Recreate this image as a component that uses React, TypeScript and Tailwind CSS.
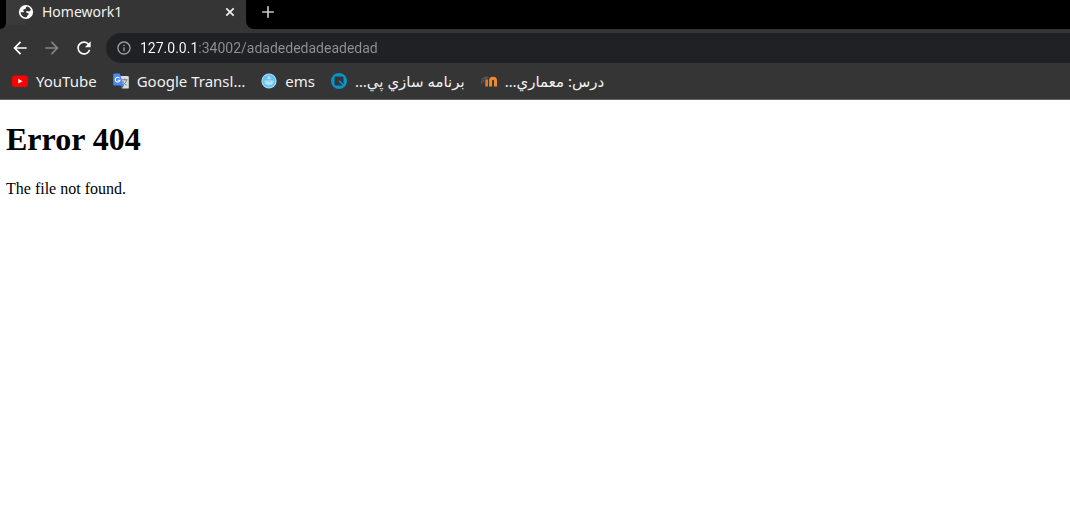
import React from "react";
import { MdArrowBack, MdArrowForward, MdAdd, MdInfoOutline, MdRefresh } from "react-icons/md";

function GlobeIcon() {
  return (
    <svg viewBox="0 0 16 16" className="mt-1 size-4" aria-hidden="true">
      <circle cx="8" cy="8" r="7.1" fill="#fff" />
      <path
        d="M9.3 2.6c1.6.4 3.2 1.800 3.800 3.700-.9-.1-1.200.7-2 1.100-.9.300-1.300-.4-2.200-.3-.7.1-1.100 1-.6 1.500.6.500 1.700.3 2.200 1 .5.800-.3 1.400-1 1.800-.5.400-.5 1.400-1.500 2C5.200 13.400 2.800 11.200 2.500 8.300H5c1 0 1.100-.9.500-1.400-.6-.6-.2-1.500.6-1.600.9-.1 1.600-.2 1.700-1.100.1-.8.500-1.500 1.500-1.600z"
        fill="#353535"
      />
    </svg>
  );
}

function YouTubeIcon() {
  return (
    <svg viewBox="0 0 16 16" className="size-4" aria-hidden="true">
      <rect x="0" y="2.5" width="16" height="11.5" rx="3" fill="#ff0000" />
      <path d="M6.3 5.8v4.8l4.2-2.4z" fill="#fff" />
    </svg>
  );
}

function TranslateIcon() {
  return (
    <svg viewBox="0 0 16 16" className="size-4" aria-hidden="true">
      <path d="M6 3h8.6a1.2 1.2 0 0 1 1.2 1.2v10.2a1.2 1.2 0 0 1-1.2 1.2H9z" fill="#dcdcdc" />
      <path d="M9 6.8h5.6M11.7 5.6v1.2M13.6 6.8c-.5 2.4-2 4.2-4 5.2M10 8.2c.6 1.8 2 3.2 3.8 4" fill="none" stroke="#707a80" strokeWidth="1" />
      <path d="M7.5 12.2h3.6L9 15.6z" fill="#3a5fc8" />
      <path d="M1.2.6h5.6l4 11.8H1.4A1.2 1.2 0 0 1 .2 11.2V1.8A1.2 1.2 0 0 1 1.2.6z" fill="#4a8af4" />
      <path d="M6.5 5.1A2.4 2.4 0 1 0 7 7.2H4.8" fill="none" stroke="#fff" strokeWidth="1.1" />
    </svg>
  );
}

function EmsIcon() {
  return (
    <svg viewBox="0 0 16 16" className="size-4" aria-hidden="true">
      <circle cx="8" cy="8" r="7.6" fill="#a9dcf5" />
      <circle cx="8" cy="8" r="6.5" fill="#64bff2" />
      <path d="M3.5 8.5h9c0 2.4-1.8 4-4.5 4s-4.5-1.6-4.500-4z" fill="#a4dcf8" />
      <path d="M3.5 8.200c.8-1 1.500.6 2.500-.2s1.300.6 2.200 0 1.300.5 2.200 0 1.300.5 2 .2M5 10.200h6M6.500 5.700 8 3.200l1.500 2.500z" fill="none" stroke="#d0eefb" strokeWidth=".9" />
    </svg>
  );
}

function QIcon() {
  return (
    <svg viewBox="0 0 16 16" className="size-4" aria-hidden="true">
      <circle cx="8" cy="8" r="8" fill="#0795c9" />
      <path d="M4.500 3.500h7l1 1V12.500h-8l-1-1v-7z" fill="#353535" />
      <path d="m8 7.800 5.500 5.500" stroke="#0795c9" strokeWidth="1.6" />
    </svg>
  );
}

function MoodleIcon() {
  return (
    <svg viewBox="0 0 16 16" className="size-4" aria-hidden="true">
      <path d="M9.600 13.500V7.600c0-3 4.900-3 4.900 0v5.900" fill="none" stroke="#ef8b2c" strokeWidth="3" />
      <path d="M5.600 6.400v7.100" stroke="#d9792d" strokeWidth="2.800" />
      <path d="M.4 5.400 5 3.200l3.400.8-3.900 2.800z" fill="#5c5350" />
      <path d="M1.200 6.200c-.6 1.300-.5 3-.5 4.600M2.600 7v2" fill="none" stroke="#93503a" strokeWidth="1" />
    </svg>
  );
}

const bookmarks = [
  { label: "YouTube", icon: <YouTubeIcon />, rtl: false },
  { label: "Google Transl…", icon: <TranslateIcon />, rtl: false },
  { label: "ems", icon: <EmsIcon />, rtl: false },
  { label: "برنامه سازي پي…", icon: <QIcon />, rtl: true },
  { label: "درس: معماري…", icon: <MoodleIcon />, rtl: true },
];

export default function App() {
  return (
    <div className="min-h-screen bg-white">
      <header className="border-b border-[#656365] bg-[#353535] font-['Noto_Sans','DejaVu_Sans',sans-serif] text-[15px] text-[#f1f1f1]">
        <div className="flex h-[29px]">
          <div className="w-1.5 rounded-br-lg bg-black" />
          <div className="flex w-60 items-start gap-2 bg-[linear-gradient(#3a3a3a,#3a3a3a)] bg-[length:20px_25px] bg-no-repeat pr-2 pl-3">
            <GlobeIcon />
            <span className="flex-1 text-sm leading-6">Homework1</span>
            <button type="button" aria-label="Close tab" className="mt-1">
              <svg viewBox="0 0 16 16" className="size-4" aria-hidden="true">
                <path d="m4.300 4.300 7.400 7.400M11.700 4.300l-7.400 7.400" stroke="currentColor" strokeWidth="1.7" />
              </svg>
            </button>
          </div>
          <div className="flex flex-1 items-start rounded-bl-lg bg-black pl-3">
            <button type="button" aria-label="New tab" className="mt-0.5 text-[#c8c8c8]">
              <MdAdd className="size-5" />
            </button>
          </div>
        </div>

        <div className="flex items-center pt-1 pl-2.5">
          <nav aria-label="History" className="flex w-24 gap-3">
            <button type="button" aria-label="Back">
              <MdArrowBack className="size-5 text-white" />
            </button>
            <button type="button" aria-label="Forward">
              <MdArrowForward className="size-5 text-[#858585]" />
            </button>
            <button type="button" aria-label="Reload">
              <MdRefresh className="size-5 text-white" />
            </button>
          </nav>
          <div className="flex h-[30px] flex-1 items-center gap-2 rounded-l-full bg-[#202124] pl-2.5">
            <MdInfoOutline className="size-4 text-[#9aa0a6]" aria-hidden="true" />
            <input
              type="text"
              aria-label="Address"
              defaultValue="127.0.0.1:34002/adadededadeadedad"
              className="min-w-0 flex-1 bg-[linear-gradient(to_right,#ffffff_58px,#8f9195_58px)] bg-clip-text font-['Roboto',sans-serif] text-sm text-transparent caret-white outline-none"
            />
          </div>
        </div>

        <nav aria-label="Bookmarks" className="flex h-9 items-center gap-4 px-3">
          {bookmarks.map((b) => (
            <a key={b.label} href="#" className="flex items-center gap-2 leading-5 whitespace-nowrap">
              {b.icon}
              <span dir={b.rtl ? "rtl" : "ltr"}>{b.label}</span>
            </a>
          ))}
        </nav>
      </header>

      <main className="px-1.5 pt-[21px] font-['Liberation_Serif',serif] text-base text-black">
        <h1 className="text-[32px] leading-9 font-bold">Error 404</h1>
        <p className="mt-5">The file not found.</p>
      </main>
    </div>
  );
}
